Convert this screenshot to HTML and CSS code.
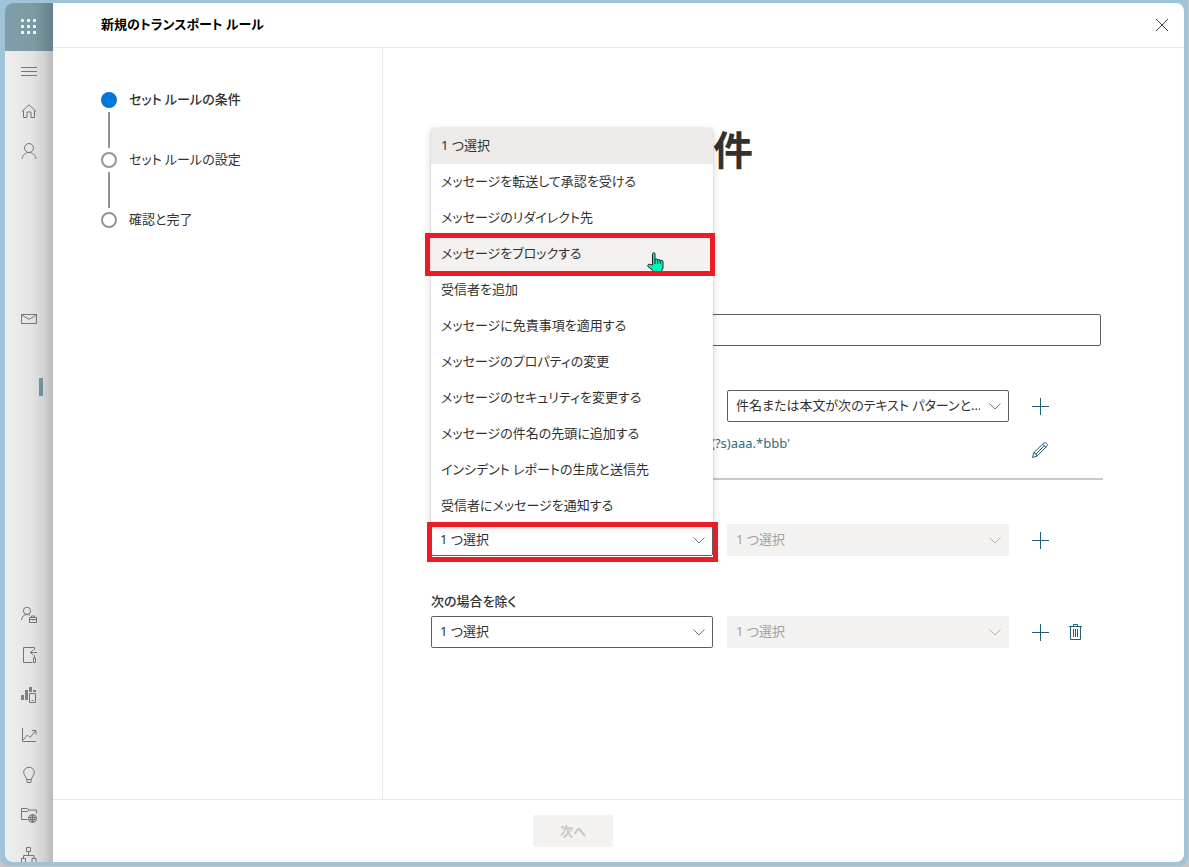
FILE: index.html
```html
<!DOCTYPE html>
<html lang="ja">
<head>
    <meta charset="UTF-8">
    <meta name="viewport" content="width=device-width, initial-scale=1.0">
    <title>新規のトランスポート ルール</title>
    <link rel="stylesheet" href="styles.css">
</head>
<body>
    <div class="window">
        <!-- Left navigation rail -->
        <nav class="rail">
            <button class="waffle" type="button" aria-label="アプリ">
                <svg width="16" height="16" viewBox="0 0 16 16" fill="#fff">
                    <rect x="0" y="0" width="3" height="3" rx="1"/><rect x="6" y="0" width="3" height="3" rx="1"/><rect x="12" y="0" width="3" height="3" rx="1"/>
                    <rect x="0" y="6" width="3" height="3" rx="1"/><rect x="6" y="6" width="3" height="3" rx="1"/><rect x="12" y="6" width="3" height="3" rx="1"/>
                    <rect x="0" y="12" width="3" height="3" rx="1"/><rect x="6" y="12" width="3" height="3" rx="1"/><rect x="12" y="12" width="3" height="3" rx="1"/>
                </svg>
            </button>
            <div class="rail-group">
                <button class="rail-item" type="button" aria-label="メニュー">
                    <svg class="icon" viewBox="0 0 16 16"><path d="M0 3.5h16M0 7.5h16M0 11.5h16"/></svg>
                </button>
                <button class="rail-item" type="button" aria-label="ホーム">
                    <svg class="icon" viewBox="0 0 16 16"><path d="M.8 7.7L8 .8l7.2 6.900M2.500 6.500v7h3.500V8h4v5.500h3.500v-7"/></svg>
                </button>
                <button class="rail-item" type="button" aria-label="ユーザー">
                    <svg class="icon" viewBox="0 0 16 16"><circle cx="8" cy="4" r="4.500"/><path d="M1 15C1.500 11 4.500 8.500 8 8.500s6.500 2.500 7 6.500"/></svg>
                </button>
            </div>
            <div class="rail-group mail-group">
                <button class="rail-item" type="button" aria-label="メール">
                    <svg class="icon" viewBox="0 0 16 16"><path d="M.5 3.500h15v9H.5zM.5 4L8 8.300 15.500 4"/></svg>
                </button>
                <button class="rail-item rail-current" type="button" aria-label="ルール"></button>
            </div>
            <div class="rail-group">
                <button class="rail-item" type="button" aria-label="役割">
                    <svg class="icon" viewBox="0 0 16 16"><circle cx="6" cy="3.800" r="3.600"/><path d="M.5 13C.8 9.500 3 7.500 6 7.500c1.200 0 2 .2 3 .8M8.500 10.500h7v5h-7zM10.500 10.500V9h3v1.500M8.500 12.500h7M12 12v1.500"/></svg>
                </button>
                <button class="rail-item" type="button" aria-label="移行">
                    <svg class="icon" viewBox="0 0 16 16"><path d="M13.500 3V.5h-11v15h9M16 5.500H9.500M12 3L9.500 5.500 12 8M13.500 8v3M12.500 11h2v4.500h-2z"/></svg>
                </button>
                <button class="rail-item" type="button" aria-label="モバイル">
                    <svg class="icon" viewBox="0 0 16 16"><path class="solid" d="M0 8h3v5H0zM4 3h3v10H4zM8 0h3v5H8zM12 3h3v2h-3z"/><path d="M8.500 6.500h6v9h-6zM10.500 13.500h2"/></svg>
                </button>
                <button class="rail-item" type="button" aria-label="レポート">
                    <svg class="icon" viewBox="0 0 16 16"><path d="M1.500 1v13.500H15M2 13l4.500-5 2.500 2.500L14.500 4M11 3.500h4v4"/></svg>
                </button>
                <button class="rail-item" type="button" aria-label="分析情報">
                    <svg class="icon" viewBox="0 0 16 16"><path d="M5.500 12.500c0-3-2.800-4-2.800-7.200a5.300 5 0 0 1 10.600 0c0 3.200-2.800 4.200-2.800 7.200zM6 12.500v3h4v-3"/></svg>
                </button>
                <button class="rail-item" type="button" aria-label="パブリック フォルダー">
                    <svg class="icon" viewBox="0 0 16 16"><path d="M6.500 12.500h-6v-11h6L8 3h7.500v3.500M.5 4.500h6L8 3"/><circle cx="11.500" cy="11.500" r="4"/><path d="M11.500 7.500v8M7.500 10.500h8M7.500 12.500h8M11.500 7.500c-2.500 2-2.500 6 0 8M11.500 7.500c2.500 2 2.500 6 0 8"/></svg>
                </button>
                <button class="rail-item" type="button" aria-label="組織">
                    <svg class="icon" viewBox="0 0 16 16"><path d="M5.500.5h4v4h-4zM7.500 4.500v4M2.500 11V8.500h10.500V11M.5 11.500h4v4h-4zM11 11.500h4v4h-4z"/></svg>
                </button>
            </div>
        </nav>

        <!-- Rule wizard -->
        <main class="panel">
            <header class="panel-header">
                <h1 class="panel-title">新規のトランスポート ルール</h1>
                <button class="icon-button close-button" type="button" aria-label="閉じる">
                    <svg width="14" height="14" viewBox="0 0 14 14"><path d="M1 1l12 12M13 1L1 13"/></svg>
                </button>
            </header>

            <div class="panel-body">
                <ol class="steps">
                    <li class="step current">セット ルールの条件</li>
                    <li class="step">セット ルールの設定</li>
                    <li class="step">確認と完了</li>
                </ol>

                <form class="rule-form" id="rule-form">
                    <h2 class="form-title">ルールの条件</h2>

                    <div class="field name-field">
                        <label for="name">名前</label>
                        <input class="text-input" type="text" id="name">
                    </div>

                    <div class="field">
                        <label for="apply">このルールを適用する</label>
                        <div class="field-row">
                            <div class="dropdown">
                                <select id="apply"><option>件名または本文</option></select>
                                <svg class="chevron" viewBox="0 0 12 7"><path d="M.5.5L6 6 11.500.5"/></svg>
                            </div>
                            <div class="dropdown">
                                <select aria-label="条件"><option>件名または本文が次のテキスト パターンと...</option></select>
                                <svg class="chevron" viewBox="0 0 12 7"><path d="M.5.5L6 6 11.500.5"/></svg>
                            </div>
                            <button class="icon-button" type="button" aria-label="条件を追加">
                                <svg width="17" height="17" viewBox="0 0 17 17"><path d="M0 8.500h17M8.500 0v17"/></svg>
                            </button>
                        </div>
                        <div class="summary">
                            <a class="pattern" href="#">'(?s)aaa.*bbb'</a>
                            <button class="icon-button" type="button" aria-label="編集">
                                <svg width="16" height="16" viewBox="0 0 16 16"><path d="M.5 15.500l1.200-4.800L12 .9c1.700-1 4 1.200 3.100 3L5 14.200zM1.700 10.700c1.800.2 3 1.500 3.300 3.500M10.800 2.200l3.100 3.100M3.500 12.500l9-9"/></svg>
                            </button>
                        </div>
                    </div>

                    <div class="field action-field">
                        <label for="action">次を実行します</label>
                        <div class="field-row">
                            <div class="dropdown open">
                                <select id="action"><option>1 つ選択</option></select>
                                <svg class="chevron" viewBox="0 0 12 7"><path d="M.5.5L6 6 11.500.5"/></svg>
                                <div class="menu" role="listbox" aria-label="次を実行します">
                                    <button class="menu-item selected" type="button" role="option">1 つ選択</button>
                                    <button class="menu-item" type="button" role="option">メッセージを転送して承認を受ける</button>
                                    <button class="menu-item" type="button" role="option">メッセージのリダイレクト先</button>
                                    <button class="menu-item hovered" type="button" role="option">メッセージをブロックする
                                        <svg class="pointer" viewBox="0 0 18 22"><path d="M5.500 13V2.200c0-2 2.500-2 2.500 0V8c.3-1.500 2.500-1.300 2.700.3.400-1.300 2.500-1 2.600.6.500-1.200 2.700-.8 2.700 1V16l-1.500 3v2.500h-8V19L1 14.500c-1-1.500.8-3 2.200-2zM8 8v4M10.700 8.300V12M13.300 9v3"/></svg>
                                    </button>
                                    <button class="menu-item" type="button" role="option">受信者を追加</button>
                                    <button class="menu-item" type="button" role="option">メッセージに免責事項を適用する</button>
                                    <button class="menu-item" type="button" role="option">メッセージのプロパティの変更</button>
                                    <button class="menu-item" type="button" role="option">メッセージのセキュリティを変更する</button>
                                    <button class="menu-item" type="button" role="option">メッセージの件名の先頭に追加する</button>
                                    <button class="menu-item" type="button" role="option">インシデント レポートの生成と送信先</button>
                                    <button class="menu-item" type="button" role="option">受信者にメッセージを通知する</button>
                                </div>
                            </div>
                            <div class="dropdown">
                                <select aria-label="処理の詳細" disabled><option>1 つ選択</option></select>
                                <svg class="chevron" viewBox="0 0 12 7"><path d="M.5.5L6 6 11.500.5"/></svg>
                            </div>
                            <button class="icon-button" type="button" aria-label="処理を追加">
                                <svg width="17" height="17" viewBox="0 0 17 17"><path d="M0 8.500h17M8.500 0v17"/></svg>
                            </button>
                        </div>
                    </div>

                    <div class="field">
                        <label for="except">次の場合を除く</label>
                        <div class="field-row">
                            <div class="dropdown">
                                <select id="except"><option>1 つ選択</option></select>
                                <svg class="chevron" viewBox="0 0 12 7"><path d="M.5.5L6 6 11.500.5"/></svg>
                            </div>
                            <div class="dropdown">
                                <select aria-label="例外の詳細" disabled><option>1 つ選択</option></select>
                                <svg class="chevron" viewBox="0 0 12 7"><path d="M.5.5L6 6 11.500.5"/></svg>
                            </div>
                            <div class="row-actions">
                                <button class="icon-button" type="button" aria-label="例外を追加">
                                    <svg width="17" height="17" viewBox="0 0 17 17"><path d="M0 8.500h17M8.500 0v17"/></svg>
                                </button>
                                <button class="icon-button" type="button" aria-label="削除">
                                    <svg width="13" height="16" viewBox="0 0 13 16"><path d="M0 2.500h13M1.500 2.500v13h10v-13M4.500 2.500v-2h4v2M4.500 5v8M6.500 5v8M8.500 5v8"/></svg>
                                </button>
                            </div>
                        </div>
                    </div>
                </form>
            </div>

            <footer class="panel-footer">
                <button class="next-button" type="submit" form="rule-form" disabled>次へ</button>
            </footer>
        </main>
    </div>
</body>
</html>
```

FILE: styles.css
```css
*, *::before, *::after {
    box-sizing: border-box;
}

body {
    margin: 0;
    background-color: #c6c6c6;
    color: #323130;
    font-family: "Noto Sans", "Noto Sans CJK JP", sans-serif;
    font-size: 13px;
    line-height: 18px;
    font-feature-settings: "palt";
}

button, input, select {
    font: inherit;
    font-feature-settings: inherit;
    color: inherit;
}

button {
    padding: 0;
    border: none;
    background: none;
    cursor: pointer;
}

/* Window frame around the rail and the panel */
.window {
    display: flex;
    height: 100vh;
    padding: 3px 4px 4px 5px;
    border: solid #c6c6c6;
    border-width: 0 1px 1px 0;
    border-radius: 0 0 10px 10px;
    background-color: #9fc3d9;
}

/* Navigation rail */
.rail {
    display: flex;
    flex: none;
    flex-direction: column;
    width: 48px;
    overflow: hidden;
    border-radius: 8px 0 0 8px;
    background: linear-gradient(to right, #efefef, #e4e4e4 55%, #d3d3d3 80%, #b9b9b9);
}

.waffle {
    display: flex;
    flex: none;
    align-items: center;
    justify-content: center;
    height: 48px;
    background: linear-gradient(to right, #809ea9, #7d9aa5 60%, #68818b);
}

.rail-group {
    display: flex;
    flex: none;
    flex-direction: column;
    padding-top: 1px;
}

.mail-group {
    gap: 28px;
    margin: 126px 0 187px;
}

.rail-item {
    display: flex;
    align-items: center;
    justify-content: center;
    height: 40px;
}

.rail-current::after {
    content: "";
    width: 4px;
    height: 18px;
    margin-left: 24px;
    background-color: #6f919c;
}

.icon {
    width: 16px;
    height: 16px;
    overflow: visible;
    fill: none;
    stroke: #757575;
}

.icon .solid {
    fill: #808080;
    stroke: none;
}

/* Panel */
.panel {
    display: flex;
    flex: 1;
    flex-direction: column;
    min-width: 0;
    border-radius: 0 8px 8px 0;
    background-color: #fff;
}

.panel-header {
    display: flex;
    flex: none;
    align-items: center;
    justify-content: space-between;
    height: 45px;
    padding: 0 5px 0 48px;
    border-bottom: 1px solid #e8e8e8;
}

.panel-title {
    margin: 0;
    padding-bottom: 2px;
    color: #000;
    font-size: 13px;
    font-weight: bold;
}

.panel-body {
    display: flex;
    flex: 1;
    min-height: 0;
}

.icon-button {
    display: flex;
    flex: none;
    align-items: center;
    justify-content: center;
    width: 35px;
    height: 32px;
}

.icon-button svg {
    fill: none;
    stroke: #1f5f70;
}

.close-button svg {
    stroke: #444;
}

/* Wizard steps */
.steps {
    flex: none;
    width: 330px;
    margin: 0;
    padding: 42px 48px;
    border-right: 1px solid #e8e8e8;
    list-style: none;
}

.step {
    position: relative;
    height: 60px;
    padding-left: 28px;
}

.step::before {
    content: "";
    position: absolute;
    top: 2px;
    left: 0;
    width: 16px;
    height: 16px;
    border: 2px solid #949494;
    border-radius: 50%;
}

.step:not(:last-child)::after {
    content: "";
    position: absolute;
    top: 22px;
    left: 7px;
    width: 2px;
    height: 36px;
    background-color: #949494;
}

.step.current {
    font-weight: 500;
}

.step.current::before {
    border-color: #0078d7;
    background-color: #0078d7;
}

/* Rule form */
.rule-form {
    flex: 1;
    padding: 76px 48px 0;
}

.form-title {
    width: 322px;
    margin: 0;
    font-size: 40px;
    font-weight: bold;
    line-height: 52px;
    text-align: right;
}

.field {
    display: flex;
    flex-direction: column;
    gap: 6px;
    max-width: 672px;
}

.field label {
    font-weight: 500;
}

.name-field {
    margin: 114px 0 20px;
    padding-right: 2px;
}

.text-input {
    height: 32px;
    padding: 0 8px;
    border: 1px solid #605e5c;
    border-radius: 2px;
}

.field-row {
    display: flex;
    gap: 14px;
}

.row-actions {
    display: flex;
}

.dropdown {
    position: relative;
    width: 282px;
}

.dropdown select {
    width: 100%;
    height: 32px;
    padding: 0 28px 2px 8px;
    border: 1px solid #605e5c;
    border-radius: 2px;
    background-color: #fff;
    appearance: none;
}

.dropdown select:disabled {
    border-color: #f3f2f1;
    background-color: #f3f2f1;
    color: #a19f9d;
    opacity: 1;
}

.chevron {
    position: absolute;
    top: 13px;
    right: 8px;
    width: 12px;
    height: 7px;
    fill: none;
    stroke: #777;
    pointer-events: none;
}

.dropdown select:disabled + .chevron {
    stroke: #b5b3b1;
}

.summary {
    display: flex;
    align-items: flex-start;
    justify-content: space-between;
    height: 52px;
    padding: 6px 46px 0 0;
    border-bottom: 2px solid #c8c8c8;
}

.pattern {
    width: 359px;
    color: #336b7c;
    text-align: right;
    text-decoration: none;
}

.action-field {
    margin: 20px 0 36px;
}

/* Opened list, drawn upwards from its drop-down */
.menu {
    position: absolute;
    bottom: 32px;
    left: 0;
    z-index: 1;
    width: 100%;
    border-radius: 2px;
    background-color: #fff;
    box-shadow: 0 3px 8px rgba(0, 0, 0, 0.18), 0 0 2px rgba(0, 0, 0, 0.12);
}

.menu-item {
    position: relative;
    display: block;
    width: 100%;
    height: 36px;
    padding: 0 10px 2px;
    text-align: left;
}

.menu-item.selected {
    background-color: #edebe9;
}

.menu-item.hovered {
    background-color: #f3f2f1;
}

/* Red highlight boxes */
.menu-item.hovered::after,
.dropdown.open::after {
    content: "";
    position: absolute;
    inset: -3px -2px -4px -6px;
    z-index: 2;
    border: 5px solid #ed1c24;
    pointer-events: none;
}

.dropdown.open::after {
    inset: -2px -5px -6px -4px;
}

.pointer {
    position: absolute;
    top: 16px;
    right: 48px;
    width: 18px;
    height: 22px;
    fill: #00f5b8;
    stroke: #222;
}

/* Footer */
.panel-footer {
    flex: none;
    height: 63px;
    padding: 15px 480px;
    border-top: 1px solid #e8e8e8;
}

.next-button {
    width: 80px;
    height: 32px;
    border-radius: 2px;
    background-color: #f3f2f1;
    color: #c8c6c4;
    font-weight: bold;
}
```
